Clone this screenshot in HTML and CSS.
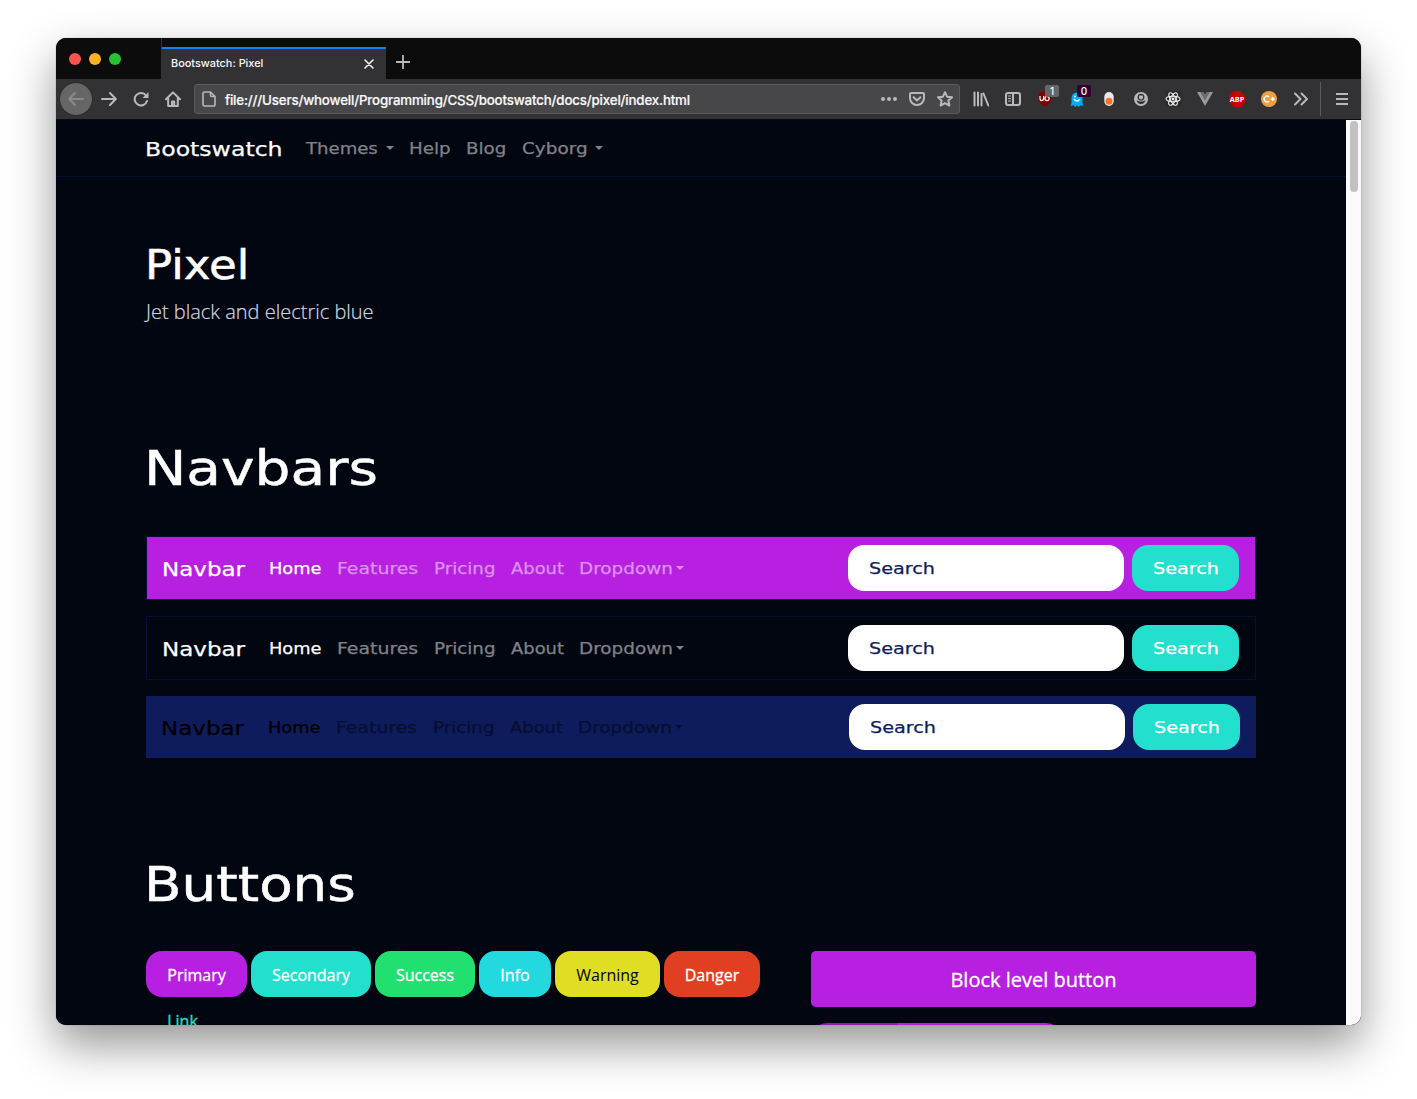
FILE: index.html
```html
<!DOCTYPE html>
<html lang="en">
<head>
<meta charset="utf-8">
<title>Bootswatch: Pixel</title>
<link rel="stylesheet" href="styles.css">
</head>
<body>
<div class="window">
  <header class="titlebar">
    <div class="lights"><i class="red"></i><i class="amber"></i><i class="green"></i></div>
    <div class="tab"><span>Bootswatch: Pixel</span>
      <svg width="10" height="10" viewBox="0 0 10 10"><path d="M1 1l8 8M9 1L1 9" stroke="#f3f3f4" stroke-width="1.6" stroke-linecap="round"/></svg>
    </div>
    <svg class="plus" width="14" height="14" viewBox="0 0 14 14"><path d="M7 .5v13M.5 7h13" stroke="#b9b9ba" stroke-width="1.8" stroke-linecap="round"/></svg>
  </header>
  <div class="toolbar">
    <div class="back"><svg width="16" height="16" viewBox="0 0 16 16"><path d="M15 8H1.5M7 2L1.2 8 7 14" class="line"/></svg></div>
    <div class="tool"><svg width="16" height="16" viewBox="0 0 16 16"><path d="M1 8h13.5M9 2l5.8 6L9 14" class="line"/></svg></div>
    <div class="tool"><svg width="16" height="16" viewBox="0 0 16 16"><path d="M13 4.4A6.3 6.3 0 1 0 14 10" class="line"/><path d="M15.5 1v6H9.5z" fill="#b9b9ba"/></svg></div>
    <div class="tool"><svg width="16" height="16" viewBox="0 0 16 16"><path d="M1 8.2L8 1.4l7 6.8M3.2 7v8h9.6V7M7 15v-4.5h2.2V15" class="line"/></svg></div>
    <div class="urlbar">
      <svg width="16" height="16" viewBox="0 0 16 16"><path d="M3.5 1h6l4.5 4.500v8a1.500 1.500 0 0 1-1.500 1.500h-9A1.500 1.500 0 0 1 2 13.500v-11A1.500 1.500 0 0 1 3.500 1zM9.500 1v3.500q0 1 1 1H14" class="line slim"/></svg>
      <span class="url">file:///Users/whowell/Programming/CSS/bootswatch/docs/pixel/index.html</span>
      <svg width="16" height="16" viewBox="0 0 16 16" fill="#b9b9ba"><circle cx="2" cy="8" r="2"/><circle cx="8" cy="8" r="2"/><circle cx="14" cy="8" r="2"/></svg>
      <svg width="16" height="16" viewBox="0 0 16 16"><path d="M2.200 2h11.600q1.200 0 1.200 1.200V7a7 7 0 0 1-14 0V3.200Q1 2 2.200 2zM4.600 6.200L8 9.400l3.400-3.200" class="line"/></svg>
      <svg width="16" height="16" viewBox="0 0 16 16"><path d="M8 1.200l2.100 4.500 4.900.6-3.600 3.300 1 4.900L8 12.100l-4.400 2.400 1-4.900L1 6.300l4.900-.6z" class="line"/></svg>
    </div>
    <div class="tool"><svg width="16" height="16" viewBox="0 0 16 16"><path d="M1.500 1.500v13M5 1.500v13M8.500 3v11.500M10.500 2.500l4.800 12" class="line"/></svg></div>
    <div class="tool"><svg width="16" height="16" viewBox="0 0 16 16"><rect x="1" y="2" width="14" height="12" rx="2" class="line"/><path d="M8 2v12" class="line"/><path d="M3 5h3M3 7.500h3M3 10h3" class="thin"/></svg></div>
    <div class="tool"><svg width="16" height="16" viewBox="0 0 16 16"><path d="M8 0q3 2 6.500 2v6q0 4-6.500 8Q1.500 12 1.500 8V2Q5 2 8 0z" fill="#800000"/><path d="M3 5v2.500q0 2 1.800 2t1.800-2V5v2.500" fill="none" stroke="#fff" stroke-width="1.200"/><circle cx="10" cy="7.500" r="2.100" fill="none" stroke="#fff" stroke-width="1.200"/></svg><b class="badge">1</b></div>
    <div class="tool"><svg width="16" height="16" viewBox="0 0 16 16"><path d="M2.500 7a5.500 5.500 0 0 1 11 0v5l1 3-3-.8L9.600 16 8 14.500 6.400 16l-1.900-1.800-3 .8 1-3z" fill="#00aef0"/><path d="M5 8q3 4 6 0" fill="none" stroke="#fff" stroke-width="1.300"/><circle cx="6" cy="5.500" r="1" fill="#fff"/></svg><b class="badge purple">0</b></div>
    <div class="tool"><svg width="16" height="16" viewBox="0 0 16 16"><rect x="3.300" y="1" width="9.400" height="14" rx="4.700" fill="#e8e8e8"/><circle cx="8" cy="10.300" r="3.500" fill="#f37726"/></svg></div>
    <div class="tool"><svg width="16" height="16" viewBox="0 0 16 16"><circle cx="8" cy="8" r="7" fill="#b9b9ba"/><circle cx="8" cy="6.200" r="3.400" fill="#323234"/><path d="M6 4.500h4v2a2 2 0 0 1-4 0z" fill="#b9b9ba"/><path d="M3.500 9.300q4.500 2.600 9 0-.8 3.700-4.500 3.700t-4.500-3.700z" fill="#323234"/></svg></div>
    <div class="tool"><svg width="16" height="16" viewBox="0 0 16 16"><rect width="16" height="16" fill="#2b2b2d"/><g fill="none" stroke="#eee" stroke-width="1.100"><ellipse cx="8" cy="8" rx="7" ry="2.700"/><ellipse cx="8" cy="8" rx="7" ry="2.700" transform="rotate(60 8 8)"/><ellipse cx="8" cy="8" rx="7" ry="2.700" transform="rotate(120 8 8)"/></g><circle cx="8" cy="8" r="1.400" fill="#eee"/></svg></div>
    <div class="tool"><svg width="16" height="16" viewBox="0 0 16 16"><path d="M0 1h3.500L8 9l4.500-8H16L8 15z" fill="#999"/><path d="M3.500 1h3L8 3.700 9.500 1h3L8 9z" fill="#707070"/></svg></div>
    <div class="tool"><svg width="16" height="16" viewBox="0 0 16 16"><path d="M4.700 0h6.600L16 4.700v6.600L11.300 16H4.700L0 11.300V4.700z" fill="#c70000"/><text x="8" y="10.900" class="abp" text-anchor="middle" textLength="14.500" lengthAdjust="spacingAndGlyphs">ABP</text></svg></div>
    <div class="tool"><svg width="16" height="16" viewBox="0 0 16 16"><circle cx="8" cy="8" r="8" fill="#f0a03c"/><path d="M8 5.800A2.900 2.900 0 1 0 8 10.200M11.700 6v4M9.700 8h4" fill="none" stroke="#fff" stroke-width="1.500"/></svg></div>
    <div class="tool"><svg width="16" height="16" viewBox="0 0 16 16"><path d="M2 2.500L7.500 8 2 13.500M8.500 2.500L14 8l-5.500 5.500" class="line"/></svg></div>
    <i class="rule"></i>
    <div class="tool"><svg width="16" height="16" viewBox="0 0 16 16"><path d="M2 3h12M2 8h12M2 13h12" class="line flat"/></svg></div>
  </div>
  <div class="viewport">
    <main class="page">
      <nav class="sitenav">
        <a class="brand wide site">Bootswatch</a>
        <a class="link themes"><span class="wide">Themes</span><i class="caret"></i></a>
        <a class="link help"><span class="wide">Help</span></a>
        <a class="link blog"><span class="wide">Blog</span></a>
        <a class="link cyborg"><span class="wide">Cyborg</span><i class="caret"></i></a>
      </nav>
      <div class="container">
        <h1 class="wide">Pixel</h1>
        <p class="lead">Jet black and electric blue</p>
        <h2 class="wide nb">Navbars</h2>
        <div class="bars">
          <nav class="bar primary">
            <a class="brand"><span class="wide">Navbar</span></a>
            <a class="link home"><span class="wide">Home</span></a><a class="link features"><span class="wide">Features</span></a><a class="link pricing"><span class="wide">Pricing</span></a><a class="link about"><span class="wide">About</span></a><a class="link dropdown"><span class="wide">Dropdown</span><i class="caret"></i></a>
            <div class="field"><span class="wide">Search</span></div><div class="search"><span class="wide">Search</span></div>
          </nav>
          <nav class="bar dark">
            <a class="brand"><span class="wide">Navbar</span></a>
            <a class="link home"><span class="wide">Home</span></a><a class="link features"><span class="wide">Features</span></a><a class="link pricing"><span class="wide">Pricing</span></a><a class="link about"><span class="wide">About</span></a><a class="link dropdown"><span class="wide">Dropdown</span><i class="caret"></i></a>
            <div class="field"><span class="wide">Search</span></div><div class="search"><span class="wide">Search</span></div>
          </nav>
          <nav class="bar light">
            <a class="brand"><span class="wide">Navbar</span></a>
            <a class="link home"><span class="wide">Home</span></a><a class="link features"><span class="wide">Features</span></a><a class="link pricing"><span class="wide">Pricing</span></a><a class="link about"><span class="wide">About</span></a><a class="link dropdown"><span class="wide">Dropdown</span><i class="caret"></i></a>
            <div class="field"><span class="wide">Search</span></div><div class="search"><span class="wide">Search</span></div>
          </nav>
        </div>
        <h2 class="wide bt">Buttons</h2>
        <div class="columns">
          <div class="buttons">
            <a class="btn b-primary">Primary</a><a class="btn b-secondary">Secondary</a><a class="btn b-success">Success</a><a class="btn b-info">Info</a><a class="btn b-warning">Warning</a><a class="btn b-danger">Danger</a><a class="btn b-link">Link</a>
          </div>
          <div class="blocks">
            <a class="block">Block level button</a>
            <div class="group"><i></i><b></b></div>
          </div>
        </div>
      </div>
    </main>
    <div class="scrollbar"><i></i></div>
  </div>
</div>
</body>
</html>
```
FILE: styles.css
```css
* { box-sizing: border-box; }
body {
  margin: 0;
  padding: 38px 56px 0;
  height: 1099px;
  overflow: hidden;
  background: #fff;
}
svg { display: block; flex: none; }
.window {
  width: 1305px;
  height: 987px;
  display: flex;
  flex-direction: column;
  border-radius: 10px;
  overflow: hidden;
  background: #020611;
  box-shadow: 0 0 1px rgba(0, 0, 0, .6), 0 20px 46px rgba(0, 0, 0, .42);
}

/* Browser chrome */
.titlebar {
  height: 41px;
  flex: none;
  display: flex;
  background: #0c0c0d;
}
.lights {
  width: 106px;
  display: flex;
  gap: 8px;
  padding: 15px 0 0 13px;
  border-right: 1px solid #333335;
}
.lights i { width: 12px; height: 12px; border-radius: 50%; }
.red { background: #ff5350; }
.amber { background: #fdb124; }
.green { background: #27c232; }
.tab {
  width: 224px;
  margin-top: 9px;
  padding: 0 12px 0 9px;
  display: flex;
  align-items: center;
  justify-content: space-between;
  border-top: 2px solid #0a84ff;
  background: #323234;
  color: #f9f9fa;
  font: 500 10.9px/28px Inter, sans-serif;
}
.tab span { padding-bottom: 2px; }
.tab svg { margin-bottom: 1px; }
.plus { margin: 17px 0 0 10px; }
.toolbar {
  height: 41px;
  flex: none;
  display: flex;
  align-items: center;
  padding: 0 3px 0 4px;
  border-bottom: 1px solid #0c0c0d;
  background: #323234;
}
.line { fill: none; stroke: #b9b9ba; stroke-width: 2; stroke-linecap: round; stroke-linejoin: round; }
.slim { stroke-width: 1.6; }
.flat { stroke-linecap: butt; }
.thin { fill: none; stroke: #b9b9ba; stroke-width: 1; }
.back {
  width: 32px;
  height: 32px;
  margin-right: 1px;
  display: grid;
  place-items: center;
  border-radius: 50%;
  background: #666667;
  box-shadow: 0 0 1px #111;
}
.back .line { stroke: #8a8a8b; }
.tool {
  position: relative;
  width: 32px;
  height: 32px;
  flex: none;
  display: grid;
  place-items: center;
}
.urlbar {
  width: 766px;
  height: 30px;
  margin: 0 5px;
  padding: 0 6px;
  display: flex;
  align-items: center;
  gap: 12px;
  border: 1px solid #5b5b5d;
  border-radius: 3px;
  background: #474749;
}
.url {
  flex: 1;
  margin-left: -4px;
  padding-top: 1px;
  color: #f9f9fa;
  font: 500 13.3px/28px Inter, sans-serif;
  letter-spacing: -.16px;
  white-space: nowrap;
  -webkit-text-stroke: .2px currentColor;
}
.badge {
  position: absolute;
  left: 16px;
  top: 2px;
  width: 14px;
  height: 12px;
  border-radius: 2px;
  background: #666;
  color: #fff;
  font: 500 10px/12px Inter, sans-serif;
  text-align: center;
}
.purple { background: #330033; }
.abp { font: 700 7.5px "Open Sans", sans-serif; fill: #fff; }
.rule { width: 1px; height: 34px; margin: 0 5px 0 3px; background: #5b5b5d; }

/* Page */
.viewport { flex: 1; min-height: 0; display: flex; }
.page { width: 1290px; overflow: hidden; background: #020611; color: #fff; }
.scrollbar { width: 15px; padding: 1px 3px 0 4px; background: #fafafa; }
.scrollbar i { display: block; height: 71px; border-radius: 4px; background: #c1c1c1; }
.wide {
  display: inline-block;
  font-family: "DejaVu Sans", sans-serif;
  font-weight: 400;
  white-space: nowrap;
  transform-origin: 0 50%;
  -webkit-text-stroke: .25px currentColor;
}
.sitenav {
  height: 57px;
  display: flex;
  align-items: center;
  padding: 2px 0 0 88.5px;
  border-bottom: 1px solid #050f38;
}
.brand { width: 107px; font-size: 20px; line-height: 30px; }
.brand .wide { transform: scaleX(1.15); }
.site { width: 161px; flex: none; transform: scaleX(1.18); }
.link { position: relative; font-size: 16px; line-height: 24px; flex: none; }
.sitenav .link { color: #808288; }
.caret {
  position: absolute;
  top: 9px;
  border: 4px solid transparent;
  border-top-color: currentColor;
  border-bottom: 0;
}
.themes { width: 103.5px; }
.themes .wide { transform: scaleX(1.13); }
.themes .caret { left: 80px; }
.help { width: 56.5px; }
.help .wide, .blog .wide { transform: scaleX(1.14); }
.blog { width: 56px; }
.cyborg .wide { transform: scaleX(1.15); }
.cyborg .caret { left: 73.5px; }
.container { width: 1110px; margin: 64px 0 0 90px; }
h1, h2, p { margin: 0; }
h1.wide, h2.wide { display: block; -webkit-text-stroke-width: .5px; }
h1.wide { font-size: 41px; line-height: 50px; transform: translate(-1px, -1px) scaleX(1.1); }
h2.wide { font-size: 48px; line-height: 58px; }
.lead {
  margin-top: 5px;
  padding-top: 1px;
  height: 30px;
  color: #d3d6e2;
  font: 300 20px/30px "Open Sans", sans-serif;
  -webkit-text-stroke: .2px currentColor;
}
h2.nb { margin: 114px 0 38px; transform: translate(-2px, -1px) scaleX(1.18); }
h2.bt { margin: 98px 0 37px; transform: translate(-2px, -1px) scaleX(1.14); }
.bars { display: grid; gap: 16px; }
.bar {
  height: 64px;
  display: flex;
  align-items: center;
  padding: 0 16px 0 15px;
  border: 1px solid #050f38;
}
.bar > .brand, .bar > .link { padding-top: 1px; }
.bar.primary { background: #b720e0; }
.bar.light { height: 62px; border: 0; background: #0e1c5d; color: #000; }
.primary .link { color: #db90ef; }
.dark .link { color: #808288; }
.light .link { color: #070e30; }
.primary .home, .dark .home { color: #fff; }
.light .home { color: #000; }
.home { width: 68px; }
.home .wide { transform: scaleX(1.11); }
.features { width: 97px; }
.features .wide { transform: scaleX(1.18); }
.pricing { width: 77px; }
.pricing .wide { transform: scaleX(1.14); }
.about { width: 68px; }
.about .wide { transform: scaleX(1.12); }
.dropdown .wide { transform: scaleX(1.15); }
.bar .caret { left: 97px; top: 10px; }
.field, .search {
  height: 46px;
  border-radius: 16px;
  font-size: 16px;
  line-height: 46px;
  padding: 1px 0 0 20.5px;
}
.field { width: 276px; margin-left: auto; background: #fff; color: #0e1c5d; }
.search { width: 107px; margin-left: 8px; background: #22e0cd; color: #fff; }
.field .wide, .search .wide { transform: scaleX(1.2); }
.columns { display: flex; justify-content: space-between; }
.buttons { width: 630px; display: flex; flex-wrap: wrap; column-gap: 4px; align-content: flex-start; }
.btn {
  height: 46px;
  border-radius: 16px;
  color: #fff;
  font: 400 16px/48px "Open Sans", sans-serif;
  text-align: center;
  -webkit-text-stroke: .3px currentColor;
}
.b-primary { width: 101px; background: #b720e0; }
.b-secondary { width: 120px; background: #22e0cd; }
.b-success { width: 100px; background: #22e070; }
.b-info { width: 72px; background: #22d9e0; }
.b-warning { width: 105px; background: #e0de22; color: #020611; -webkit-text-stroke-width: 0; }
.b-danger { width: 96px; background: #e03f22; }
.b-link { width: 73px; color: #22e0cd; }
.blocks { width: 445px; }
.block {
  display: block;
  height: 56px;
  border-radius: 5px;
  background: #b720e0;
  font: 400 20px/57px "Open Sans", sans-serif;
  text-align: center;
  -webkit-text-stroke: .3px currentColor;
}
.group { width: 251px; height: 46px; margin-top: 16px; display: flex; border-radius: 16px; overflow: hidden; }
.group i { width: 86px; background: #921ab3; }
.group b { flex: 1; background: #b720e0; }
```
